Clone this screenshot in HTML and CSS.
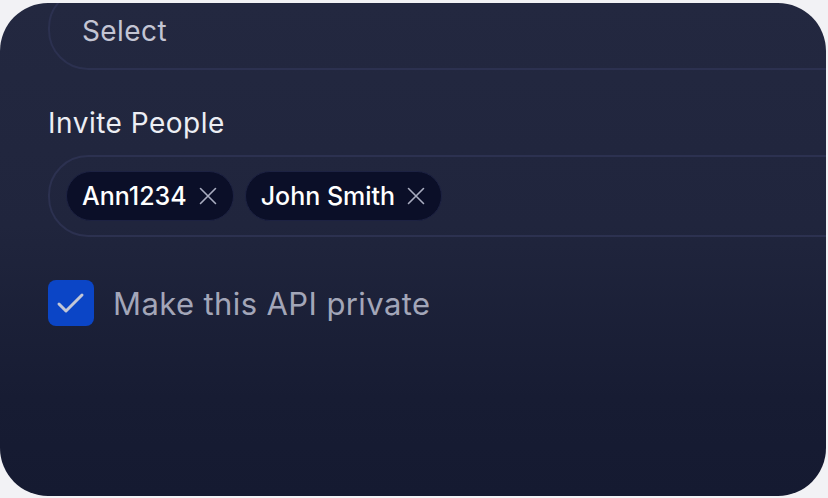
FILE: index.html
```html
<!DOCTYPE html>
<html>
<head>
<meta charset="utf-8">
<link rel="stylesheet" href="styles.css">
</head>
<body>
<div class="card">
  <div class="content">
    <div class="field field-select">
      <span class="placeholder">Select</span>
    </div>
    <label class="label">Invite People</label>
    <div class="field field-tags">
      <span class="chip">Ann1234
        <svg class="x" viewBox="0 0 18 18" width="18" height="18"><path d="M1.5 1.5 L16.5 16.5 M16.5 1.5 L1.5 16.5" stroke="currentColor" stroke-width="1.6" fill="none" stroke-linecap="round"/></svg>
      </span>
      <span class="chip">John Smith
        <svg class="x" viewBox="0 0 18 18" width="18" height="18"><path d="M1.5 1.5 L16.5 16.5 M16.5 1.5 L1.5 16.5" stroke="currentColor" stroke-width="1.6" fill="none" stroke-linecap="round"/></svg>
      </span>
    </div>
    <div class="check-row">
      <span class="checkbox">
        <svg viewBox="0 0 46 46" width="46" height="46"><path d="M11 24 L18 31 L34 15" stroke="#c3c7d6" stroke-width="3" fill="none" stroke-linecap="round" stroke-linejoin="round"/></svg>
      </span>
      <span class="check-label">Make this API private</span>
    </div>
  </div>
</div>
</body>
</html>
```
FILE: styles.css
```css
* { box-sizing: border-box; }
html, body {
  margin: 0;
  padding: 0;
  background: #f2f2f5;
  width: 828px;
  height: 498px;
  overflow: hidden;
}
body {
  padding: 3px 2px 2px 0;
  font-family: Inter, "Noto Sans", sans-serif;
}
.card {
  width: 826px;
  height: 493px;
  border-radius: 48px;
  overflow: hidden;
  background: linear-gradient(180deg, #232840 0%, #20253d 45%, #171c33 80%, #151a31 100%);
}
.content {
  padding-left: 48px;
  margin-top: -15px;
  display: flex;
  flex-direction: column;
}
.field {
  width: 820px;
  height: 82px;
  border: 2px solid #2c3150;
  border-radius: 40px;
  display: flex;
  align-items: center;
  flex-shrink: 0;
}
.field-select {
  padding-left: 32px;
  padding-top: 3px;
}
.placeholder {
  color: #c3c5d3;
  font-size: 28px;
  letter-spacing: 0.4px;
}
.label {
  margin-top: 36px;
  color: #eceef4;
  font-size: 28px;
  letter-spacing: 0.5px;
  line-height: 34px;
}
.field-tags {
  margin-top: 15px;
  padding-left: 16px;
  gap: 11px;
}
.chip {
  display: inline-flex;
  align-items: center;
  height: 50px;
  padding: 0 16px 0 15px;
  gap: 12px;
  border-radius: 25px;
  background: #0b0f28;
  border: 1.5px solid #1d2242;
  color: #ffffff;
  font-size: 25px;
  font-weight: 500;
}
.x {
  color: #a9adc0;
  width: 18px;
  height: 18px;
}
.check-row {
  margin-top: 43px;
  display: flex;
  align-items: center;
  gap: 19px;
}
.checkbox {
  width: 46px;
  height: 46px;
  border-radius: 8px;
  background: #0b45c6;
  display: flex;
}
.check-label {
  color: #a3a6b8;
  font-size: 31px;
  letter-spacing: 0.4px;
}
```
